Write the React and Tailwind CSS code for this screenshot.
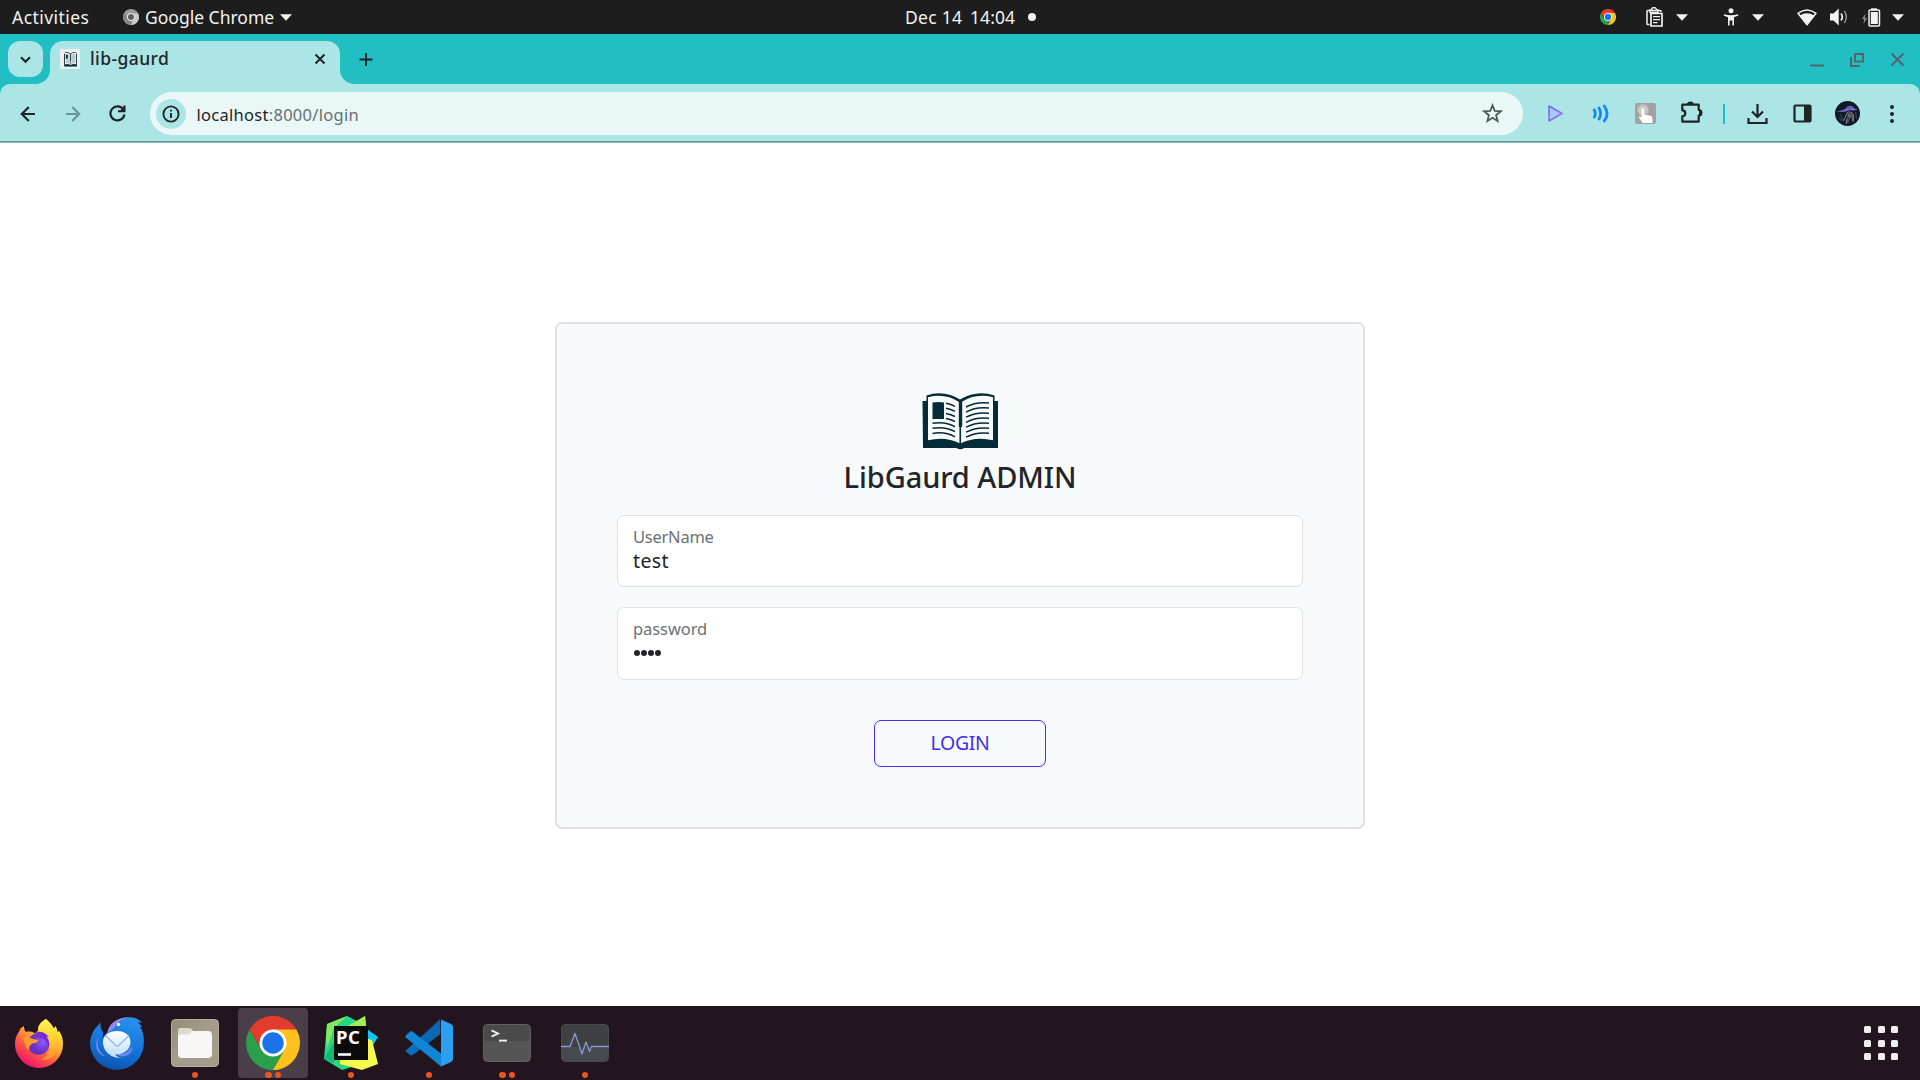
import React from "react";

function Icon({ box, className = "", children }) {
  const [, , w, h] = box.split(" ");
  return (
    <svg viewBox={box} width={w} height={h} className={"block shrink-0 " + className} fill="none" aria-hidden="true">
      {children}
    </svg>
  );
}

function Caret() {
  return (
    <Icon box="0 0 12 7">
      <path d="M0 0.3h12L6 6.7z" fill="#f2f2f2" />
    </Icon>
  );
}

function ChromeLogo({ size }) {
  return (
    <svg viewBox="0 0 54 54" width={size} height={size} className="block shrink-0" aria-hidden="true">
      <path d="M27 27 3.6 13.5A27 27 0 0 1 50.4 13.5z" fill="#e33b2e" />
      <path d="M3.6 13.5A27 27 0 0 0 27 54L38.7 33.75 27 27 15.3 33.75z" fill="#2c9f4b" />
      <path d="M50.4 13.5A27 27 0 0 1 27 54L38.7 33.75 27 13.5z" fill="#fcc21b" />
      <path d="M3.6 13.5 15.3 33.75 27 27V13.5z" fill="#e33b2e" />
      <circle cx="27" cy="27" r="13.5" fill="#fff" />
      <circle cx="27" cy="27" r="10.7" fill="#1a73e8" />
    </svg>
  );
}

function Book({ className }) {
  return (
    <svg viewBox="922 393 76 57" className={className} preserveAspectRatio="none" aria-hidden="true">
      <path d="M922.5 401h4v-5.5q17-6 33.5 4 17-10 34.5-4v5.5h3.5v47h-34q-3.500 2.500-7.500 0h-33.500z" fill="#052b38" />
      <path d="M928 397.300q17-4.500 31.500 5v41q-14-7.300-31.500-3z" fill="#f8f9fb" />
      <path d="M993 397.300q-17-4.500-32 5v41q14-7.300 32-3z" fill="#f8f9fb" />
      <path d="M960.500 401v44" stroke="#052b38" strokeWidth="1.200" />
      <path d="M960.500 401v26" stroke="#052b38" strokeWidth="3.400" />
      <path d="M932.500 402.500q6-.9 11.500 0v16.500h-11.500z" fill="#052b38" />
      <g fill="none" stroke="#052b38" strokeWidth="1.500">
        <path d="M946 403.300q5 .9 9 3M946 408.300q5 .9 9 3M946 413.500q5 .9 9 3M946 418.500q5 .9 9 3" />
        <path d="M932.500 423.200q13-2 22.500 3.500M932.500 428.200q13-2 22.500 3.500M932.500 433.400q13-2 22.500 3.500" />
        <path d="M966 407q10-5.500 23-4M966 412.100q10-5.500 23-4M966 417.200q10-5.500 23-4M966 422.300q10-5.500 23-4M966 427.200q10-5.500 23-4M966 432.200q10-5.500 23-4M966 437.200q10-5.500 23-4" />
      </g>
    </svg>
  );
}

function TopBar() {
  return (
    <header className="flex h-[34px] items-center bg-[#1d1d1d] text-[17.5px] leading-none text-[#f2f2f2]">
      <div className="flex w-[905px] items-center pl-3">
        <span className="w-[111px] pt-px tracking-[0.45px]">Activities</span>
        <Icon box="0 0 16 16">
          <circle cx="8" cy="8" r="8" fill="#9a9a9a" />
          <path d="M8 4.500h7.200A8 8 0 0 1 8 16l3-6.300z" fill="#c9c9c9" />
          <path d="M1.100 4 5 10l3 1.500L8 16A8 8 0 0 1 1.100 4z" fill="#858585" />
          <circle cx="8" cy="8" r="4" fill="#e9e9e9" />
          <circle cx="8" cy="8" r="3" fill="#5f5f5f" />
        </Icon>
        <span className="ml-[6px] w-[135px] pt-px">Google Chrome</span>
        <Caret />
      </div>
      <div className="flex items-center">
        <span className="w-[65px] pt-px tracking-[0.28px]">Dec 14</span>
        <span className="w-[58px] pt-px tracking-[0.07px]">14:04</span>
        <span className="size-2 rounded-full bg-[#f2f2f2]" />
      </div>
      <div className="ml-auto flex items-center pr-4">
        <ChromeLogo size={16} />
        <Icon box="1645 7 19 20" className="ml-[29px]">
          <path d="M1649.500 24.500h-1.700q-.8 0-.8-.8V11.300q0-.8.8-.8h12.400q.8 0 .8.800v1" stroke="#f2f2f2" strokeWidth="1.500" />
          <path d="M1650 12.500V10h1.500a2.500 2.500 0 0 1 5 0h1.500v2.500z" stroke="#f2f2f2" strokeWidth="1.300" />
          <path d="M1651 13.500h11v12.500h-11z" stroke="#f2f2f2" strokeWidth="1.700" />
          <path d="M1653 16.700h7M1653 19.700h7M1653 22.700h4.500" stroke="#f2f2f2" strokeWidth="1.300" />
        </Icon>
        <div className="ml-3"><Caret /></div>
        <Icon box="1723 8 16 18" className="ml-[35px]">
          <circle cx="1731" cy="10.700" r="2.500" fill="#f2f2f2" />
          <path d="M1724 14.200q7 2.200 14 0l.4 1.300-4.400 1.700v8.300h-1.600V20.500h-2.800v5h-1.600v-8.300l-4.400-1.700z" fill="#f2f2f2" />
        </Icon>
        <div className="ml-[13px]"><Caret /></div>
        <Icon box="1797 9 20 17" className="ml-[33px]">
          <path d="M1798 13.300q9-6.800 18 0L1807 24.800z" fill="#1d1d1d" stroke="#f2f2f2" strokeWidth="1.500" strokeLinejoin="round" />
          <path d="M1799.800 15.600q7.200-4.800 14.400 0L1807 24.800z" fill="#f2f2f2" />
        </Icon>
        <Icon box="1830 8 18 18" className="ml-[13px]">
          <path d="M1830 13.500h3.500l5.200-5v17l-5.200-5h-3.500z" fill="#f2f2f2" />
          <path d="M1841 13.500q2.600 3.500 0 7" stroke="#f2f2f2" strokeWidth="1.700" />
          <path d="M1844.200 11q4.400 6 0 12" stroke="#8b8b8b" strokeWidth="1.500" />
        </Icon>
        <Icon box="1861 6 20 21" className="ml-[13px]">
          <path d="M1865.600 12.500 1862 18h2.200l-.7 5 3.500-6h-2.200z" fill="#8b8b8b" />
          <path d="M1871 7.300h6v2h-6z" fill="#f2f2f2" />
          <rect x="1869" y="9" width="10.500" height="16" rx="1" stroke="#f2f2f2" strokeWidth="1.500" />
          <path d="M1870.800 11h7v12h-7z" fill="#f2f2f2" />
        </Icon>
        <div className="ml-[11px]"><Caret /></div>
      </div>
    </header>
  );
}

function TabStrip() {
  return (
    <div className="flex h-[50px] bg-[#21bec4]">
      <button className="mt-[7px] ml-2 flex h-9 w-[35px] items-center justify-center rounded-xl bg-[#abe5e5]">
        <Icon box="20 54 11 9">
          <path d="m21 56.300 4.500 4.500 4.500-4.500" stroke="#1f2426" strokeWidth="2.100" />
        </Icon>
      </button>
      <Icon box="35 70 15 14" className="-ml-2 mt-9">
        <path d="M35 84a15 14 0 0 0 15-14v14z" fill="#abe5e5" />
      </Icon>
      <div className="mt-[7px] flex h-[43px] w-[290px] rounded-t-[13px] bg-[#abe5e5] pl-[10px]">
        <div className="mt-2 flex size-5 items-center justify-center bg-[#eeeeee]">
          <Book className="h-[15px] w-[13px]" />
        </div>
        <span className="mt-[5px] ml-[10px] text-[17.5px] leading-6 font-medium tracking-[0.4px] text-[#1f2426]">lib-gaurd</span>
        <Icon box="314 53 12 12" className="mt-3 mr-[14px] ml-auto">
          <path d="m315.500 54.500 9 9m0-9-9 9" stroke="#1f2426" strokeWidth="2" />
        </Icon>
      </div>
      <Icon box="340 70 15 14" className="mt-9">
        <path d="M355 84a15 14 0 0 1-15-14v14z" fill="#abe5e5" />
      </Icon>
      <Icon box="359 53 14 13" className="mt-[19px] ml-1">
        <path d="M366 53v13M359.500 59.500h13" stroke="#1f2426" strokeWidth="2" />
      </Icon>
      <div className="mt-[18px] ml-auto flex pr-[15px] text-[#53666b]">
        <Icon box="1810 52 14 16"><path d="M1810 65.500h14" stroke="currentColor" strokeWidth="2" /></Icon>
        <Icon box="1849 52 16 16" className="ml-[25px]">
          <path d="M1855 54h8v7.500h-8z" stroke="currentColor" strokeWidth="2" />
          <path d="M1851 57v9h8.500" stroke="currentColor" strokeWidth="2" />
        </Icon>
        <Icon box="1890 52 15 16" className="ml-[25px]">
          <path d="m1891.500 53.500 12 12m0-12-12 12" stroke="currentColor" strokeWidth="2" />
        </Icon>
      </div>
    </div>
  );
}

function Cell({ children }) {
  return <div className="flex w-[45px] shrink-0 items-center justify-center">{children}</div>;
}

function Toolbar() {
  return (
    <div className="bg-[#21bec4]">
      <div className="flex h-[58px] items-center rounded-t-[10px] border-b border-[#678f92] bg-[#abe5e5] pt-0.5 pl-[5px]">
        <Cell>
          <Icon box="20 105 16 16"><path d="M35 113H21.800m7-7-7 7 7 7" stroke="#1f2426" strokeWidth="2.200" /></Icon>
        </Cell>
        <Cell>
          <Icon box="64 105 16 16"><path d="M65 113h13.200m-7-7 7 7-7 7" stroke="#6d9597" strokeWidth="2.200" /></Icon>
        </Cell>
        <Cell>
          <Icon box="109 105 17 17">
            <path d="M123.300 109.500a7 7 0 1 0 1.100 5" stroke="#1f2426" strokeWidth="2.200" />
            <path d="M125.300 105.500v6.500h-6.500z" fill="#1f2426" />
            <path d="M124.300 105.500v5.700H118" stroke="#1f2426" strokeWidth="2" />
          </Icon>
        </Cell>
        <div className="ml-[10px] flex h-[43px] w-[1373px] items-center rounded-full bg-[#e9f8f7] pl-[6px]">
          <span className="flex size-[30px] items-center justify-center rounded-full bg-[#abe5e5]">
            <Icon box="0 0 18 18">
              <circle cx="9" cy="9" r="7.600" stroke="#1f2426" strokeWidth="1.900" />
              <path d="M9 8v5M9 4.700v1.900" stroke="#1f2426" strokeWidth="1.900" />
            </Icon>
          </span>
          <span className="ml-[10.5px] pt-[2px] text-[16.5px] leading-6 tracking-[0.28px] text-[#1f2426]">
            localhost<span className="text-[#676f70]">:8000/login</span>
          </span>
          <Icon box="1482 103 21 21" className="mr-5 ml-auto">
            <path d="m1492.500 105.300 2.200 5.600 6.100.4-4.700 3.900 1.500 5.900-5.100-3.300-5.100 3.300 1.500-5.900-4.700-3.900 6.100-.4z" stroke="#50595b" strokeWidth="1.800" />
          </Icon>
        </div>
        <div className="ml-[10px] flex items-center">
          <Cell>
            <Icon box="1547 104 17 19">
              <defs><linearGradient id="play" x1="0" y1="0" x2="1" y2="1"><stop stopColor="#5f6df0" /><stop offset="1" stopColor="#b266ea" /></linearGradient></defs>
              <path d="M1549 106v15l13-7.500z" fill="#a9c8f2" stroke="url(#play)" strokeWidth="1.500" strokeLinejoin="round" />
            </Icon>
          </Cell>
          <Cell>
            <Icon box="1591 104 18 19">
              <g stroke="#1686fb" strokeWidth="2.800" strokeLinecap="round">
                <path d="M1593.300 110q2 3.500 0 7M1598 108q3.200 5.500 0 11M1603.200 106q5.800 7.500 0 15" />
              </g>
            </Icon>
          </Cell>
          <Cell>
            <Icon box="1635 103 21 21">
              <rect x="1635" y="103" width="21" height="21" rx="2" fill="#a2a2a2" />
              <circle cx="1643" cy="110" r="5.500" fill="#c9c9c9" stroke="#b8b8b8" />
              <path d="M1641.500 109.500q0-1.500 1.300-1.500t1.300 1.500v5l6.500 1.300q1.800.4 1.800 2V123h-9.800l-4-6q1.200-1.200 2.900.5z" fill="#fff" />
            </Icon>
          </Cell>
          <Cell>
            <Icon box="1680 101 23 23" className="-mt-0.5 ml-px">
              <path d="M1682.300 104.700h16.400v5.300q2.600 0 2.600 2.800t-2.600 2.800v6h-16.400v-5.300q3 0 3-3t-3-3z" stroke="#1f2426" strokeWidth="2.200" strokeLinejoin="round" />
              <path d="M1687 104.500q0-3 3.400-3t3.400 3zM1699 109.500q3.200 0 3.200 3.300t-3.200 3.300z" fill="#1f2426" />
            </Icon>
          </Cell>
          <div className="flex w-[22px] justify-center"><span className="h-5 w-0.5 bg-[#21bec4]" /></div>
          <Cell>
            <Icon box="1747 102 21 22">
              <path d="M1757.500 103v12M1752 110.500l5.500 5.500 5.500-5.500M1748.500 117v5h18v-5" stroke="#1f2426" strokeWidth="2.200" />
            </Icon>
          </Cell>
          <Cell>
            <Icon box="1793 104 19 19">
              <rect x="1794.500" y="105.500" width="16" height="16" rx="1" stroke="#1f2426" strokeWidth="2.200" />
              <path d="M1804 105.500h6.500v16h-6.500z" fill="#1f2426" />
            </Icon>
          </Cell>
          <Cell>
            <Icon box="0 0 25 25">
              <circle cx="12.500" cy="12.500" r="12.500" fill="#131726" />
              <path d="M1.500 10.200q7-.5 11-4.200 3.500-2.500 5.500 0 1.500 2 5 2.500-4 2-8 .500-6 3-13.500 1.200z" fill="#7468c4" />
              <path d="M12 5.500q3.500-2 5 1l-4 1.500z" fill="#3f63c0" />
              <path d="M13.500 9.500q3 .5 4 3.500l1.500 6-2 1-1.500-5-2 7-2-.500 1-8z" fill="#4b4f5c" />
              <path d="m12.500 11-4 9M16 11l2.500 3-.5 7M13 14l3 2M12 18l-1 5" stroke="#a3a9b3" strokeWidth=".8" />
              <path d="M5 13l3 6M20.500 11l1 7M4 17l3 3" stroke="#2c4460" strokeWidth="1.200" />
            </Icon>
          </Cell>
          <Cell>
            <Icon box="0 0 4 18" className="-ml-px">
              <circle cx="2" cy="2" r="2" fill="#1f2426" /><circle cx="2" cy="9" r="2" fill="#1f2426" /><circle cx="2" cy="16" r="2" fill="#1f2426" />
            </Icon>
          </Cell>
        </div>
      </div>
      <div className="h-px bg-[#87c2c3]" />
    </div>
  );
}

function Field({ label, className, labelClass, children }) {
  return (
    <div className={"rounded-[7px] border border-[#dee2e6] bg-white px-[15px] pt-[9px] " + className}>
      <div className={"text-[16.5px] leading-6 text-[#6c7074] " + labelClass}>{label}</div>
      {children}
    </div>
  );
}

function Login() {
  return (
    <main className="flex h-[863px] justify-center bg-white pt-[179px]">
      <section className="flex h-[507px] w-[810px] flex-col items-center rounded-[7px] border-2 border-[#dee2e6] bg-[#f8f9fb] px-[60px] pt-[69px]">
        <Book className="block h-[57px] w-[76px]" />
        <h1 className="mt-[9px] text-[29px] leading-9 font-medium -tracking-[0.08px] text-[#212529]">LibGaurd ADMIN</h1>
        <Field label="UserName" className="mt-5 h-[72px] w-[686px]" labelClass="-tracking-[0.25px]">
          <div className="text-[19.5px] leading-6 tracking-[0.4px] text-[#212529]">test</div>
        </Field>
        <Field label="password" className="mt-5 h-[73px] w-[686px]" labelClass="-tracking-[0.08px]">
          <div className="mt-[9px] ml-px flex gap-[1.5px]">
            {[0, 1, 2, 3].map((i) => <span key={i} className="size-[5.5px] rounded-full bg-[#212529]" />)}
          </div>
        </Field>
        <button className="mt-10 h-[47px] w-[172px] rounded-[7px] border border-[#4130f0] pb-[2px] text-[19.5px] leading-6 -tracking-[0.35px] text-[#4130f0]">LOGIN</button>
      </section>
    </main>
  );
}

function Firefox() {
  return (
    <Icon box="14 1017 50 51">
      <defs>
        <linearGradient id="ffBody" x1=".8" y1=".1" x2=".25" y2=".95"><stop stopColor="#fff04a" /><stop offset=".35" stopColor="#ffb52e" /><stop offset=".65" stopColor="#ff5a40" /><stop offset="1" stopColor="#f0126e" /></linearGradient>
        <radialGradient id="ffGlobe" cx=".7" cy=".4"><stop stopColor="#9059ff" /><stop offset="1" stopColor="#6a2fc0" /></radialGradient>
        <linearGradient id="ffTail" x1=".5" y1="0" x2=".6" y2="1"><stop stopColor="#fff44f" /><stop offset=".5" stopColor="#ffce32" /><stop offset="1" stopColor="#ff8a2a" /></linearGradient>
      </defs>
      <path d="M46 1018c5 4 6.500 8 7.500 10l2-3c1 2 2 4 2 6l1.500-1c3 4 4 8 4 13a24 24 0 1 1-48 0c0-6 2-10 4.500-13l.5-2c1.500-1.500 3-2.500 4-3 0 2.500.500 4.500 2 6 3-1 6-.500 9 1.500l3-3c0-5 5-9 8-11.500z" fill="url(#ffBody)" />
      <path d="M45.500 1018c8 6 9 11 11 14 4 7 3 16-2 22-3 4-9 6-14 5 7-3 11-10 8-18-3-5-8-6-10.500-12.500 0-5 4-8 7.500-10.500z" fill="url(#ffTail)" />
      <circle cx="38.500" cy="1043" r="10.800" fill="url(#ffGlobe)" />
      <path d="M37 1031q7-1 12 5l-3-.500q4 5 3 10-3-8-9-9-3-1-5-3z" fill="#7a2bd0" />
      <path d="M22 1037c4-2 7-1 10 .5 2 1.500 5 .5 6.500 1.500-1 3-4 3-6 3.500-3 1.500-4 4-3 7-5-3-4-8-7.500-12.500z" fill="#ff9a2b" />
    </Icon>
  );
}

function Thunderbird() {
  return (
    <Icon box="89 1017 56 54">
      <defs>
        <linearGradient id="tbBody" x1=".7" y1="0" x2=".4" y2="1"><stop stopColor="#2a90ee" /><stop offset=".55" stopColor="#1475dc" /><stop offset="1" stopColor="#0d54ae" /></linearGradient>
        <linearGradient id="tbMail" x1="0" y1="0" x2="0" y2="1"><stop stopColor="#fff" /><stop offset="1" stopColor="#b9dcfb" /></linearGradient>
      </defs>
      <path d="M101 1023.500c-1 3-.500 5 1 8 2 3 1 5 0 8l8-10c3-6 8-10 15-11 7-1 13 .500 17 5l-4-.300 4.500 5-2.500-.500c3 4 4 9 3.800 15A26.500 26.500 0 0 1 90 1045c0-8 4-16 11-21.500z" fill="url(#tbBody)" />
      <path d="M107.500 1034c.5-8 8-15.500 21-15.500-7 1.500-10 4-12.500 7.500-2 4-5 5-8.500 8z" fill="#9a86e8" />
      <path d="M99 1037c-3 8-1 16 6 20-8-1-12-11-6-20zM116 1054c7 3 13-1 16-7 2 7-6 12-13 10z" fill="#6f87e6" />
      <circle cx="118.500" cy="1025.500" r="1.700" fill="#fff" />
      <path d="M117 1032c8 0 13.500 4.500 13.500 11 0 6.500-5 11-10.500 12q-3.500.5-5 .5 3 3.500 8 3.500c-11 1-20-6-20-16 0-6.500 6-11 14-11z" fill="url(#tbMail)" />
      <path d="m105.500 1036.500 10.500 10.200q1.200.9 2.400 0l10.600-10.200" stroke="#93b4de" strokeWidth="1.200" />
    </Icon>
  );
}

function Files() {
  return (
    <Icon box="171 1018 48 50">
      <defs><linearGradient id="files" x1="0" y1="0" x2="1" y2="1"><stop stopColor="#928c77" /><stop offset=".5" stopColor="#a49d8b" /><stop offset="1" stopColor="#a39b87" /></linearGradient></defs>
      <rect x="171.500" y="1019.500" width="47" height="47" rx="4" fill="url(#files)" stroke="#b6ae9c" />
      <path d="M178 1040v-9q0-3 3-3h8q2 0 3 1.500l1.500 2h13v8z" fill="#dedad0" />
      <rect x="178" y="1031" width="34" height="27" rx="4" fill="#f8f7f5" />
      <path d="M178 1031h14l-1.500 2.500q-.7 1-2.500 1h-7q-3 0-3 3z" fill="#dedad0" />
    </Icon>
  );
}

function PyCharm() {
  return (
    <div className="relative size-[54px]">
      <Icon box="324 1016 54 54">
        <path d="m327 1024 20-8 10 5 8-5 2 18 1 28-26 8-18-11z" fill="#23da82" />
        <path d="m327 1024 20-8-13 12-7 20-1-10z" fill="#84e85f" />
        <path d="m334 1042-10 17 10 4z" fill="#12b877" />
        <path d="m365 1016 2 18-18 1-8-5z" fill="#a2ef55" />
        <path d="m367 1029 11 8-8 13-4-4z" fill="#10c8f0" />
        <path d="m340 1060 28-21 4 1 6 24-16 6-22-6z" fill="#f4f94d" />
        <path d="M334 1026h34v34h-34z" fill="#0b0b0b" />
        <path d="M338 1053.200h13v2.600h-13z" fill="#fff" />
      </Icon>
      <span className="absolute top-[11px] left-[12px] text-[18.5px] leading-[20px] font-bold tracking-[0.6px] text-white">PC</span>
    </div>
  );
}

function VSCode() {
  return (
    <Icon box="405 1019 48 48">
      <path d="m440 1019.200-31.500 29.300q-.900.800 0 1.600l3.300 3.600q1 1 2.200.200L440.500 1034z" fill="#0b68b0" />
      <path d="m405.800 1050.500 12-11 7 6-12.500 9.500q-1.200.900-2.200 0l-4.300-3.500q-.800-.500 0-1z" fill="#0b6db8" />
      <path d="m405.800 1035.500 4.300-4q1-.900 2.200 0L441 1053.500v13L405.800 1037.500q-1-1 0-2z" fill="#0f86d6" />
      <path d="M440.500 1019.200 451 1024q2 1 2 3v32q0 2-2 3l-10.500 4.800q1 0 .5-2v-44q.300-1.600-.500-1.600z" fill="#2ba0f3" />
    </Icon>
  );
}

function Terminal() {
  return (
    <Icon box="483 1018 48 50">
      <rect x="483.500" y="1024.500" width="47" height="37" rx="4" fill="#555" stroke="#616161" />
      <path d="M484 1041v-12.500q0-3.500 3.500-3.500h39q3.500 0 3.500 3.500V1041z" fill="#4a4a4a" />
      <path d="m491.500 1030.300 6.500 3.200-6.500 3.200" stroke="#eee" strokeWidth="1.900" />
      <path d="M499 1040.600h8" stroke="#eee" strokeWidth="1.900" />
    </Icon>
  );
}

function Monitor() {
  return (
    <Icon box="561 1018 48 50">
      <rect x="561.500" y="1024.500" width="47" height="37" rx="4" fill="#3e4041" stroke="#4b4b4b" />
      <path d="M562 1047h46v10.500q0 3.500-3.500 3.500h-39q-3.500 0-3.500-3.500z" fill="#46494d" />
      <path d="M561 1046.500h9l5-13 7 20.500 4-12 3.500 9.500 1.800-5H609" stroke="#8799cf" strokeWidth="1.300" strokeLinejoin="round" />
    </Icon>
  );
}

function DockItem({ dots = 0, active, children }) {
  return (
    <div className={"relative mt-0.5 mr-2 flex h-[70px] w-[70px] items-center justify-center rounded-[4px] " + (active ? "bg-[#4a3f48]" : "")}>
      {children}
      <div className="absolute inset-x-0 bottom-0 flex justify-center gap-[3px]">
        {Array.from({ length: dots }, (_, i) => <span key={i} className="size-[6.5px] rounded-full bg-[#e95420]" />)}
      </div>
    </div>
  );
}

function Dock() {
  return (
    <footer className="flex h-[74px] bg-[#231520] pl-1">
      <DockItem><Firefox /></DockItem>
      <DockItem><Thunderbird /></DockItem>
      <DockItem dots={1}><Files /></DockItem>
      <DockItem dots={2} active><ChromeLogo size={54} /></DockItem>
      <DockItem dots={1}><PyCharm /></DockItem>
      <DockItem dots={1}><VSCode /></DockItem>
      <DockItem dots={2}><Terminal /></DockItem>
      <DockItem dots={1}><Monitor /></DockItem>
      <div className="mt-5 mr-[22px] ml-auto grid h-[34px] w-[34px] grid-cols-3 gap-[6.5px]">
        {Array.from({ length: 9 }, (_, i) => <span key={i} className="size-[7px] rounded-[1.5px] bg-[#efeeec]" />)}
      </div>
    </footer>
  );
}

export default function App() {
  return (
    <div className="h-[1080px] w-[1920px] overflow-hidden bg-white font-['Noto_Sans',sans-serif]">
      <TopBar />
      <TabStrip />
      <Toolbar />
      <Login />
      <Dock />
    </div>
  );
}
